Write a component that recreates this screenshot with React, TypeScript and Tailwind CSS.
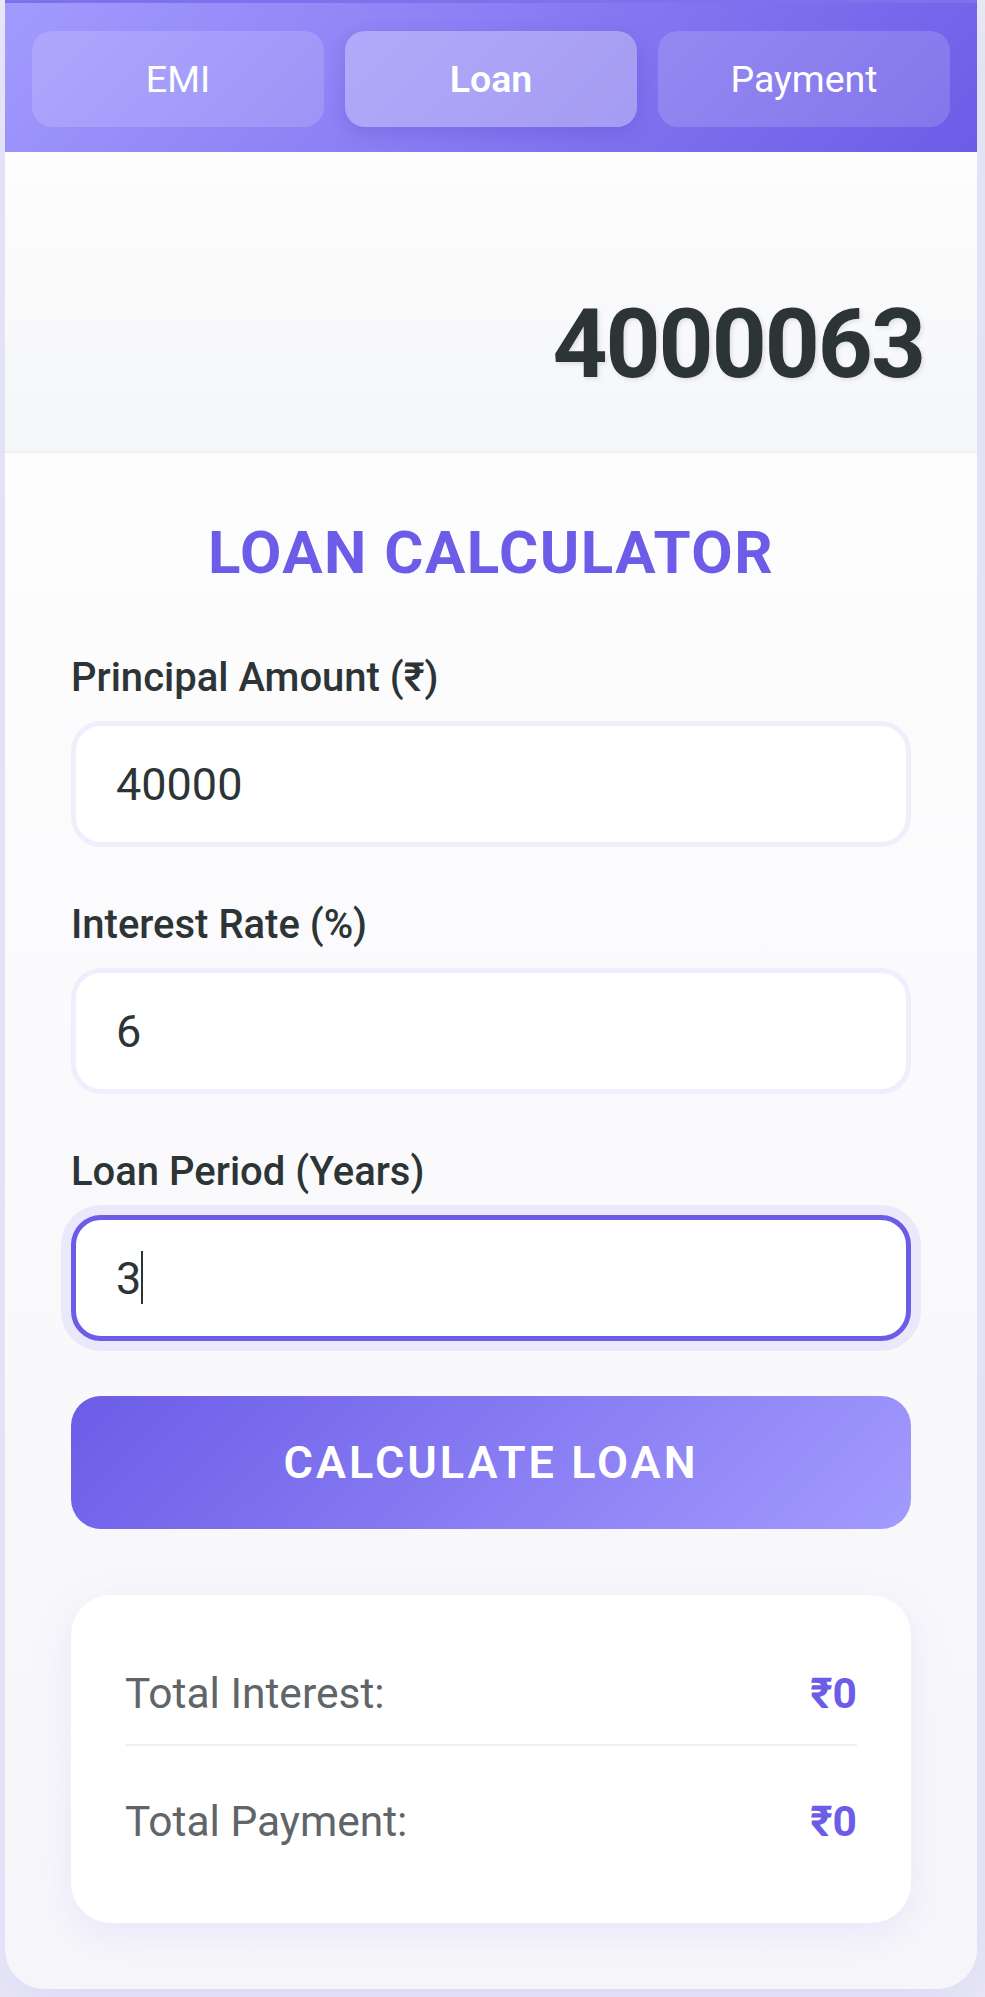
import { useEffect, useRef, useState } from 'react'

const TABS = ['EMI', 'Loan', 'Payment']

function Field({
  label,
  value,
  onChange,
  focused = false,
}: {
  label: string
  value: string
  onChange: (v: string) => void
  focused?: boolean
}) {
  const ref = useRef<HTMLInputElement>(null)

  useEffect(() => {
    if (focused && ref.current) {
      ref.current.focus()
      const len = ref.current.value.length
      ref.current.setSelectionRange(len, len)
    }
  }, [focused])

  return (
    <div className="mb-[55px]">
      <label className="block mb-[21px] text-[40px] leading-[45px] font-medium text-[#2d3436]">
        {label}
      </label>
      <div className="relative">
        <input
          ref={ref}
          type="text"
          inputMode="decimal"
          value={value}
          onChange={(e) => onChange(e.target.value)}
          className={`block w-full h-[126px] px-[40px] rounded-[30px] border-[5px] bg-white text-[45px] text-[#2d3436] outline-none ${
            focused
              ? 'border-[#6c5ce7] shadow-[0_0_0_10px_rgba(108,92,231,0.1)] caret-transparent'
              : 'border-[#f0eefc]'
          }`}
        />
        {/* caret drawn so it shows steadily in the still */}
        {focused && (
          <span
            className="absolute top-[36px] h-[53px] w-[2px] bg-[#2d3436] pointer-events-none"
            style={{ left: 45 + value.length * 25.3 }}
          />
        )}
      </div>
    </div>
  )
}

function ResultRow({ label, value, last = false }: { label: string; value: string; last?: boolean }) {
  return (
    <div
      className={`flex items-center justify-between py-[24px] ${
        last ? '' : 'border-b-2 border-[#f0eff8] mb-[25px]'
      }`}
    >
      <span className="text-[42.5px] leading-[53px] text-[#5f6568]">{label}</span>
      <span className="text-[42.5px] leading-[53px] font-bold text-[#6c5ce7]">{value}</span>
    </div>
  )
}

export default function App() {
  const [active, setActive] = useState('Loan')
  const [principal, setPrincipal] = useState('40000')
  const [rate, setRate] = useState('6')
  const [years, setYears] = useState('3')

  return (
    <div className="min-h-screen bg-[#ebeaf7] font-['Roboto','Liberation_Sans',sans-serif]">
      <div className="ml-[5px] w-[972px] rounded-b-[40px] overflow-hidden bg-[linear-gradient(to_bottom,#ffffff,#f6f6fa)] shadow-[0_20px_60px_rgba(108,92,231,0.12)]">
        {/* tabs */}
        <div className="border-t-[3px] border-[#7d72ec] bg-[linear-gradient(135deg,#a29bfe,#6c5ce7)] pt-[28px] pb-[25px] px-[27px]">
          <div className="grid grid-cols-3 gap-[21px]">
            {TABS.map((t) => (
              <button
                key={t}
                onClick={() => setActive(t)}
                className={`h-[96px] rounded-[20px] text-[37.5px] text-white ${
                  active === t
                    ? 'bg-white/30 font-semibold shadow-[0_6px_18px_rgba(60,40,160,0.18)]'
                    : 'bg-white/15'
                }`}
              >
                {t}
              </button>
            ))}
          </div>
        </div>

        {/* display */}
        <div className="h-[301px] flex items-end justify-end pr-[53px] pb-[59px] border-b-2 border-[#efeff2] bg-[linear-gradient(to_bottom,#fdfdfd,#f5f6f8)]">
          <div className="text-[96px] leading-[96px] font-bold tracking-[-2px] text-[#2d3436] [text-shadow:2px_2px_4px_rgba(0,0,0,0.1)]">
            4000063
          </div>
        </div>

        {/* form */}
        <div className="px-[66px] pt-[64px] pb-[66px]">
          <h2 className="mb-[66px] text-center text-[60px] leading-[72px] font-bold tracking-[1.5px] text-[#6c5ce7]">
            LOAN CALCULATOR
          </h2>

          <Field label="Principal Amount (₹)" value={principal} onChange={setPrincipal} />
          <Field label="Interest Rate (%)" value={rate} onChange={setRate} />
          <Field label="Loan Period (Years)" value={years} onChange={setYears} focused />

          <button className="block w-full h-[133px] rounded-[30px] bg-[linear-gradient(135deg,#6c5ce7,#a29bfe)] text-[45px] font-semibold tracking-[3px] text-white">
            CALCULATE LOAN
          </button>

          <div className="mt-[66px] rounded-[40px] bg-white px-[54px] pt-[48px] pb-[51px] shadow-[0_10px_40px_rgba(108,92,231,0.1)]">
            <ResultRow label="Total Interest:" value="₹0" />
            <ResultRow label="Total Payment:" value="₹0" last />
          </div>
        </div>
      </div>
    </div>
  )
}
